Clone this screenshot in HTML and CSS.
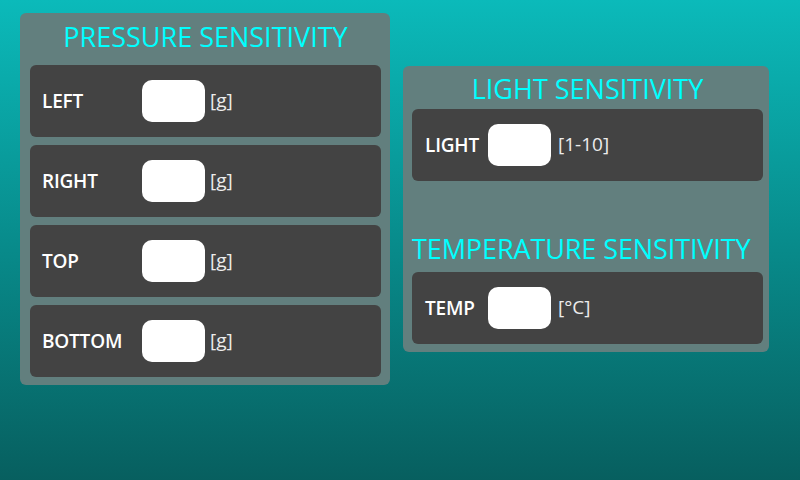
FILE: index.html
```html
<!DOCTYPE html>
<html>
<head>
<meta charset="utf-8">
<link rel="stylesheet" href="styles.css">
</head>
<body>
<div class="screen">
  <section class="panel panel-pressure">
    <h2 class="title title-center">PRESSURE SENSITIVITY</h2>
    <div class="rows">
      <div class="row"><span class="label label-wide">LEFT</span><span class="input"></span><span class="unit">[g]</span></div>
      <div class="row"><span class="label label-wide">RIGHT</span><span class="input"></span><span class="unit">[g]</span></div>
      <div class="row"><span class="label label-wide">TOP</span><span class="input"></span><span class="unit">[g]</span></div>
      <div class="row"><span class="label label-wide">BOTTOM</span><span class="input"></span><span class="unit">[g]</span></div>
    </div>
  </section>
  <section class="panel panel-right">
    <h2 class="title title-center title-light">LIGHT SENSITIVITY</h2>
    <div class="row row-right"><span class="label label-narrow">LIGHT</span><span class="input"></span><span class="unit unit-gap">[1-10]</span></div>
    <h2 class="title title-temp">TEMPERATURE SENSITIVITY</h2>
    <div class="row row-right"><span class="label label-narrow">TEMP</span><span class="input"></span><span class="unit unit-gap">[°C]</span></div>
  </section>
</div>
</body>
</html>
```
FILE: styles.css
```css
html, body {
  margin: 0;
  padding: 0;
}
body {
  width: 800px;
  height: 480px;
  overflow: hidden;
  background: linear-gradient(to bottom, #0bbaba 0%, #088c8c 50%, #075f5f 100%);
  font-family: "Open Sans", "Noto Sans", sans-serif;
}
.screen {
  display: flex;
  align-items: flex-start;
  padding: 13px 0 0 20px;
  gap: 13px;
}
.panel {
  background: #627f7e;
  border-radius: 6px;
  box-sizing: border-box;
}
.panel-pressure {
  width: 370px;
  padding: 0 9px 8px 10px;
}
.panel-right {
  width: 366px;
  margin-top: 53px;
  padding: 0 6px 8px 9px;
}
.title {
  margin: 0;
  color: #00ffff;
  font-weight: 400;
  font-size: 27px;
  letter-spacing: 0;
  white-space: nowrap;
}
.title-center {
  text-align: center;
  height: 52px;
  line-height: 48px;
}
.title-light {
  height: 43px;
  line-height: 46px;
}
.title-temp {
  margin-left: 0;
  padding-top: 46px;
  height: 45px;
  line-height: 43px;
  letter-spacing: -0.1px;
}
.rows {
  display: flex;
  flex-direction: column;
  gap: 8px;
}
.row {
  display: flex;
  align-items: center;
  height: 72px;
  background: #434343;
  border-radius: 6px;
  padding-left: 12px;
  box-sizing: border-box;
}
.row-right {
  padding-left: 13px;
}
.label {
  color: #ffffff;
  font-weight: 600;
  font-size: 19px;
  letter-spacing: -0.2px;
}
.label-wide {
  width: 100px;
}
.label-narrow {
  width: 63px;
}
.input {
  width: 63px;
  height: 42px;
  background: #ffffff;
  border-radius: 10px;
}
.unit {
  color: #ececec;
  font-size: 19px;
  margin-left: 5px;
  margin-top: -2px;
}
.unit-gap {
  margin-left: 7px;
}
```
